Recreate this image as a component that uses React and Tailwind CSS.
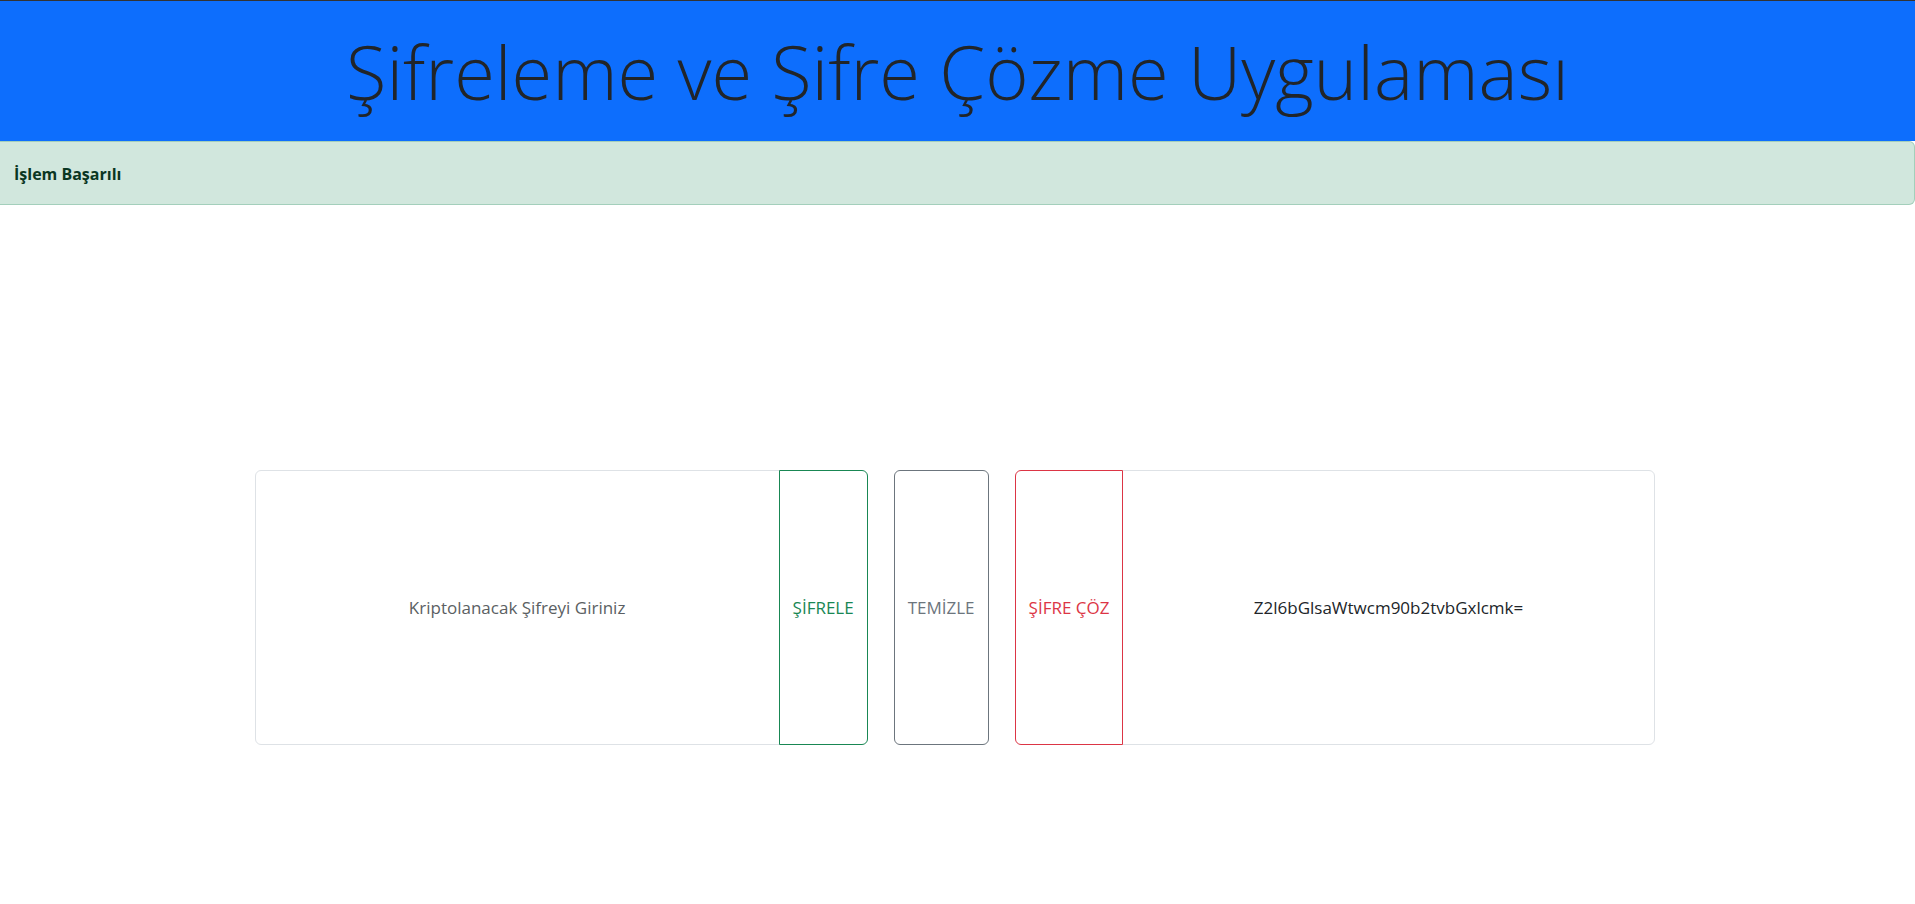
import { useState } from "react";

const fieldClass =
  "min-w-0 flex-1 border border-[#dee2e6] bg-white px-3.5 text-center text-[#212529] placeholder:text-[#5b5f63] outline-none focus:border-[#86b7fe]";
const buttonClass = "relative border px-[13px] whitespace-nowrap cursor-pointer";

export default function App() {
  const [plain, setPlain] = useState("");
  const [cipher, setCipher] = useState("Z2l6bGlsaWtwcm90b2tvbGxlcmk=");

  const clear = () => {
    setPlain("");
    setCipher("");
  };

  return (
    <div className="min-h-screen bg-white font-['Segoe_UI','Open_Sans','Noto_Sans',sans-serif] text-[17px] leading-7 text-[#212529]">
      <header className="border-t border-[#333333] bg-[#0d6efd] pt-[23px] pb-[21px] text-center">
        <h1 className="text-[74px] leading-[96px] font-light">Şifreleme ve Şifre Çözme Uygulaması</h1>
      </header>

      <div
        role="alert"
        className="rounded-r-md border border-l-0 border-[#a3cfbb] bg-[#d1e7dd] px-3.5 pt-[18px] pb-4 text-base leading-7 font-bold text-[#0a3622]"
      >
        İşlem Başarılı
      </div>

      <main className="mt-[265px] mr-[13.6%] ml-[13.3%] flex h-[275px] gap-[26px]">
        <div className="flex min-w-0 flex-[613]">
          <input
            type="text"
            aria-label="Kriptolanacak Şifreyi Giriniz"
            placeholder="Kriptolanacak Şifreyi Giriniz"
            value={plain}
            onChange={(e) => setPlain(e.target.value)}
            className={`${fieldClass} rounded-l-md`}
          />
          <button
            type="button"
            onClick={() => setCipher(btoa(plain))}
            className={`${buttonClass} -ml-px rounded-r-md border-[#198754] text-[#198754]`}
          >
            ŞİFRELE
          </button>
        </div>

        <button type="button" onClick={clear} className={`${buttonClass} rounded-md border-[#6c757d] text-[#6c757d]`}>
          TEMİZLE
        </button>

        <div className="flex min-w-0 flex-[640]">
          <button
            type="button"
            onClick={() => setPlain(atob(cipher))}
            className={`${buttonClass} rounded-l-md border-[#dc3545] text-[#dc3545]`}
          >
            ŞİFRE ÇÖZ
          </button>
          <input
            type="text"
            aria-label="Şifreli Metin"
            value={cipher}
            onChange={(e) => setCipher(e.target.value)}
            className={`${fieldClass} -ml-px rounded-r-md`}
          />
        </div>
      </main>
    </div>
  );
}
